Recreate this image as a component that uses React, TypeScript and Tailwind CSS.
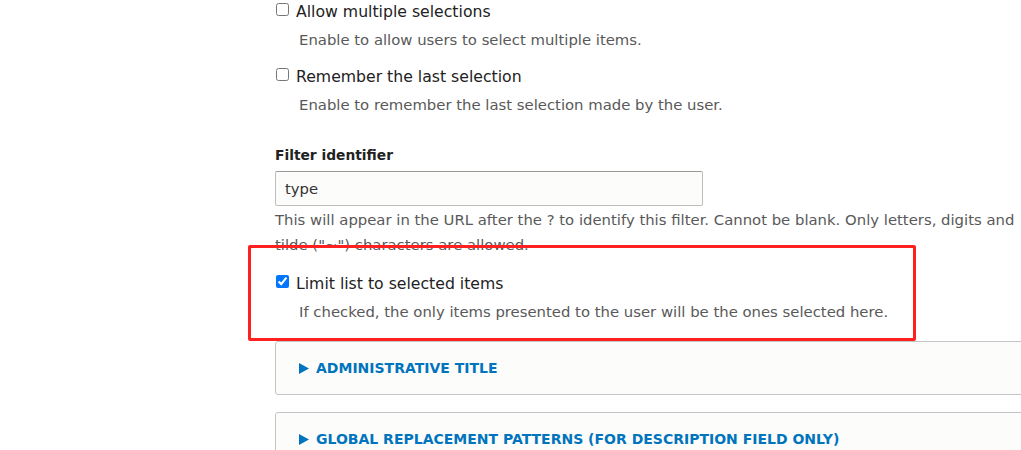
import React from 'react'

const font = "font-['DejaVu_Sans',sans-serif]"

function CheckItem({ label, desc, checked }: { label: string; desc: string; checked?: boolean }) {
  return (
    <div>
      <label className="flex items-start">
        <input type="checkbox" defaultChecked={checked} className="w-[13px] h-[13px] m-0 ml-[1px] shrink-0" />
        <span className="ml-[7px] text-[15.7px] leading-[18px] text-[#222]">{label}</span>
      </label>
      <div className="pl-[24px] mt-[10px] text-[14.85px] leading-[18px] text-[#595959] whitespace-nowrap">{desc}</div>
    </div>
  )
}

function Details({ title }: { title: string }) {
  return (
    <div className="border border-[#c4c4c4] rounded-[3px] bg-[#fcfcfa] h-[54px] flex items-center pl-[23px]">
      <svg width="10" height="11" viewBox="0 0 10 11" className="shrink-0">
        <path d="M0 0 L10 5.5 L0 11 Z" fill="#0074bd" />
      </svg>
      <span className="ml-[7px] text-[14px] font-bold uppercase text-[#0074bd] whitespace-nowrap">{title}</span>
    </div>
  )
}

export default function App() {
  return (
    <div className={`w-[1021px] h-[450px] overflow-hidden bg-white ${font}`}>
      <div className="pl-[275px] pt-[3px] w-[1400px]">
        <CheckItem label="Allow multiple selections" desc="Enable to allow users to select multiple items." />
        <div className="mt-[19px]">
          <CheckItem label="Remember the last selection" desc="Enable to remember the last selection made by the user." />
        </div>

        <div className="mt-[32px] text-[13.8px] leading-[18px] font-bold text-[#222]">Filter identifier</div>
        <input
          type="text"
          defaultValue="type"
          className="mt-[7px] block w-[428px] h-[35px] px-[9px] border border-[#bdbdbd] border-t-[#9a9a9a] rounded-[2px] bg-[#fcfcfa] text-[14.8px] text-[#333] outline-none"
        />
        <div className="mt-[1.5px] text-[14.85px] leading-[25px] text-[#595959] whitespace-nowrap">
          <div>This will appear in the URL after the ? to identify this filter. Cannot be blank. Only letters, digits and</div>
          <div>tilde ("~") characters are allowed.</div>
        </div>

        <div className="relative mt-[17.5px]">
          <CheckItem checked label="Limit list to selected items" desc="If checked, the only items presented to the user will be the ones selected here." />
          <div className="absolute top-[-30px] left-[-27px] w-[668px] h-[96px] border-[3px] border-[#ff2020] rounded-[2px] pointer-events-none" />
        </div>

        <div className="mt-[20px] w-[800px]">
          <Details title="Administrative title" />
        </div>
        <div className="mt-[17px] w-[800px]">
          <Details title="Global replacement patterns (for description field only)" />
        </div>
      </div>
    </div>
  )
}
